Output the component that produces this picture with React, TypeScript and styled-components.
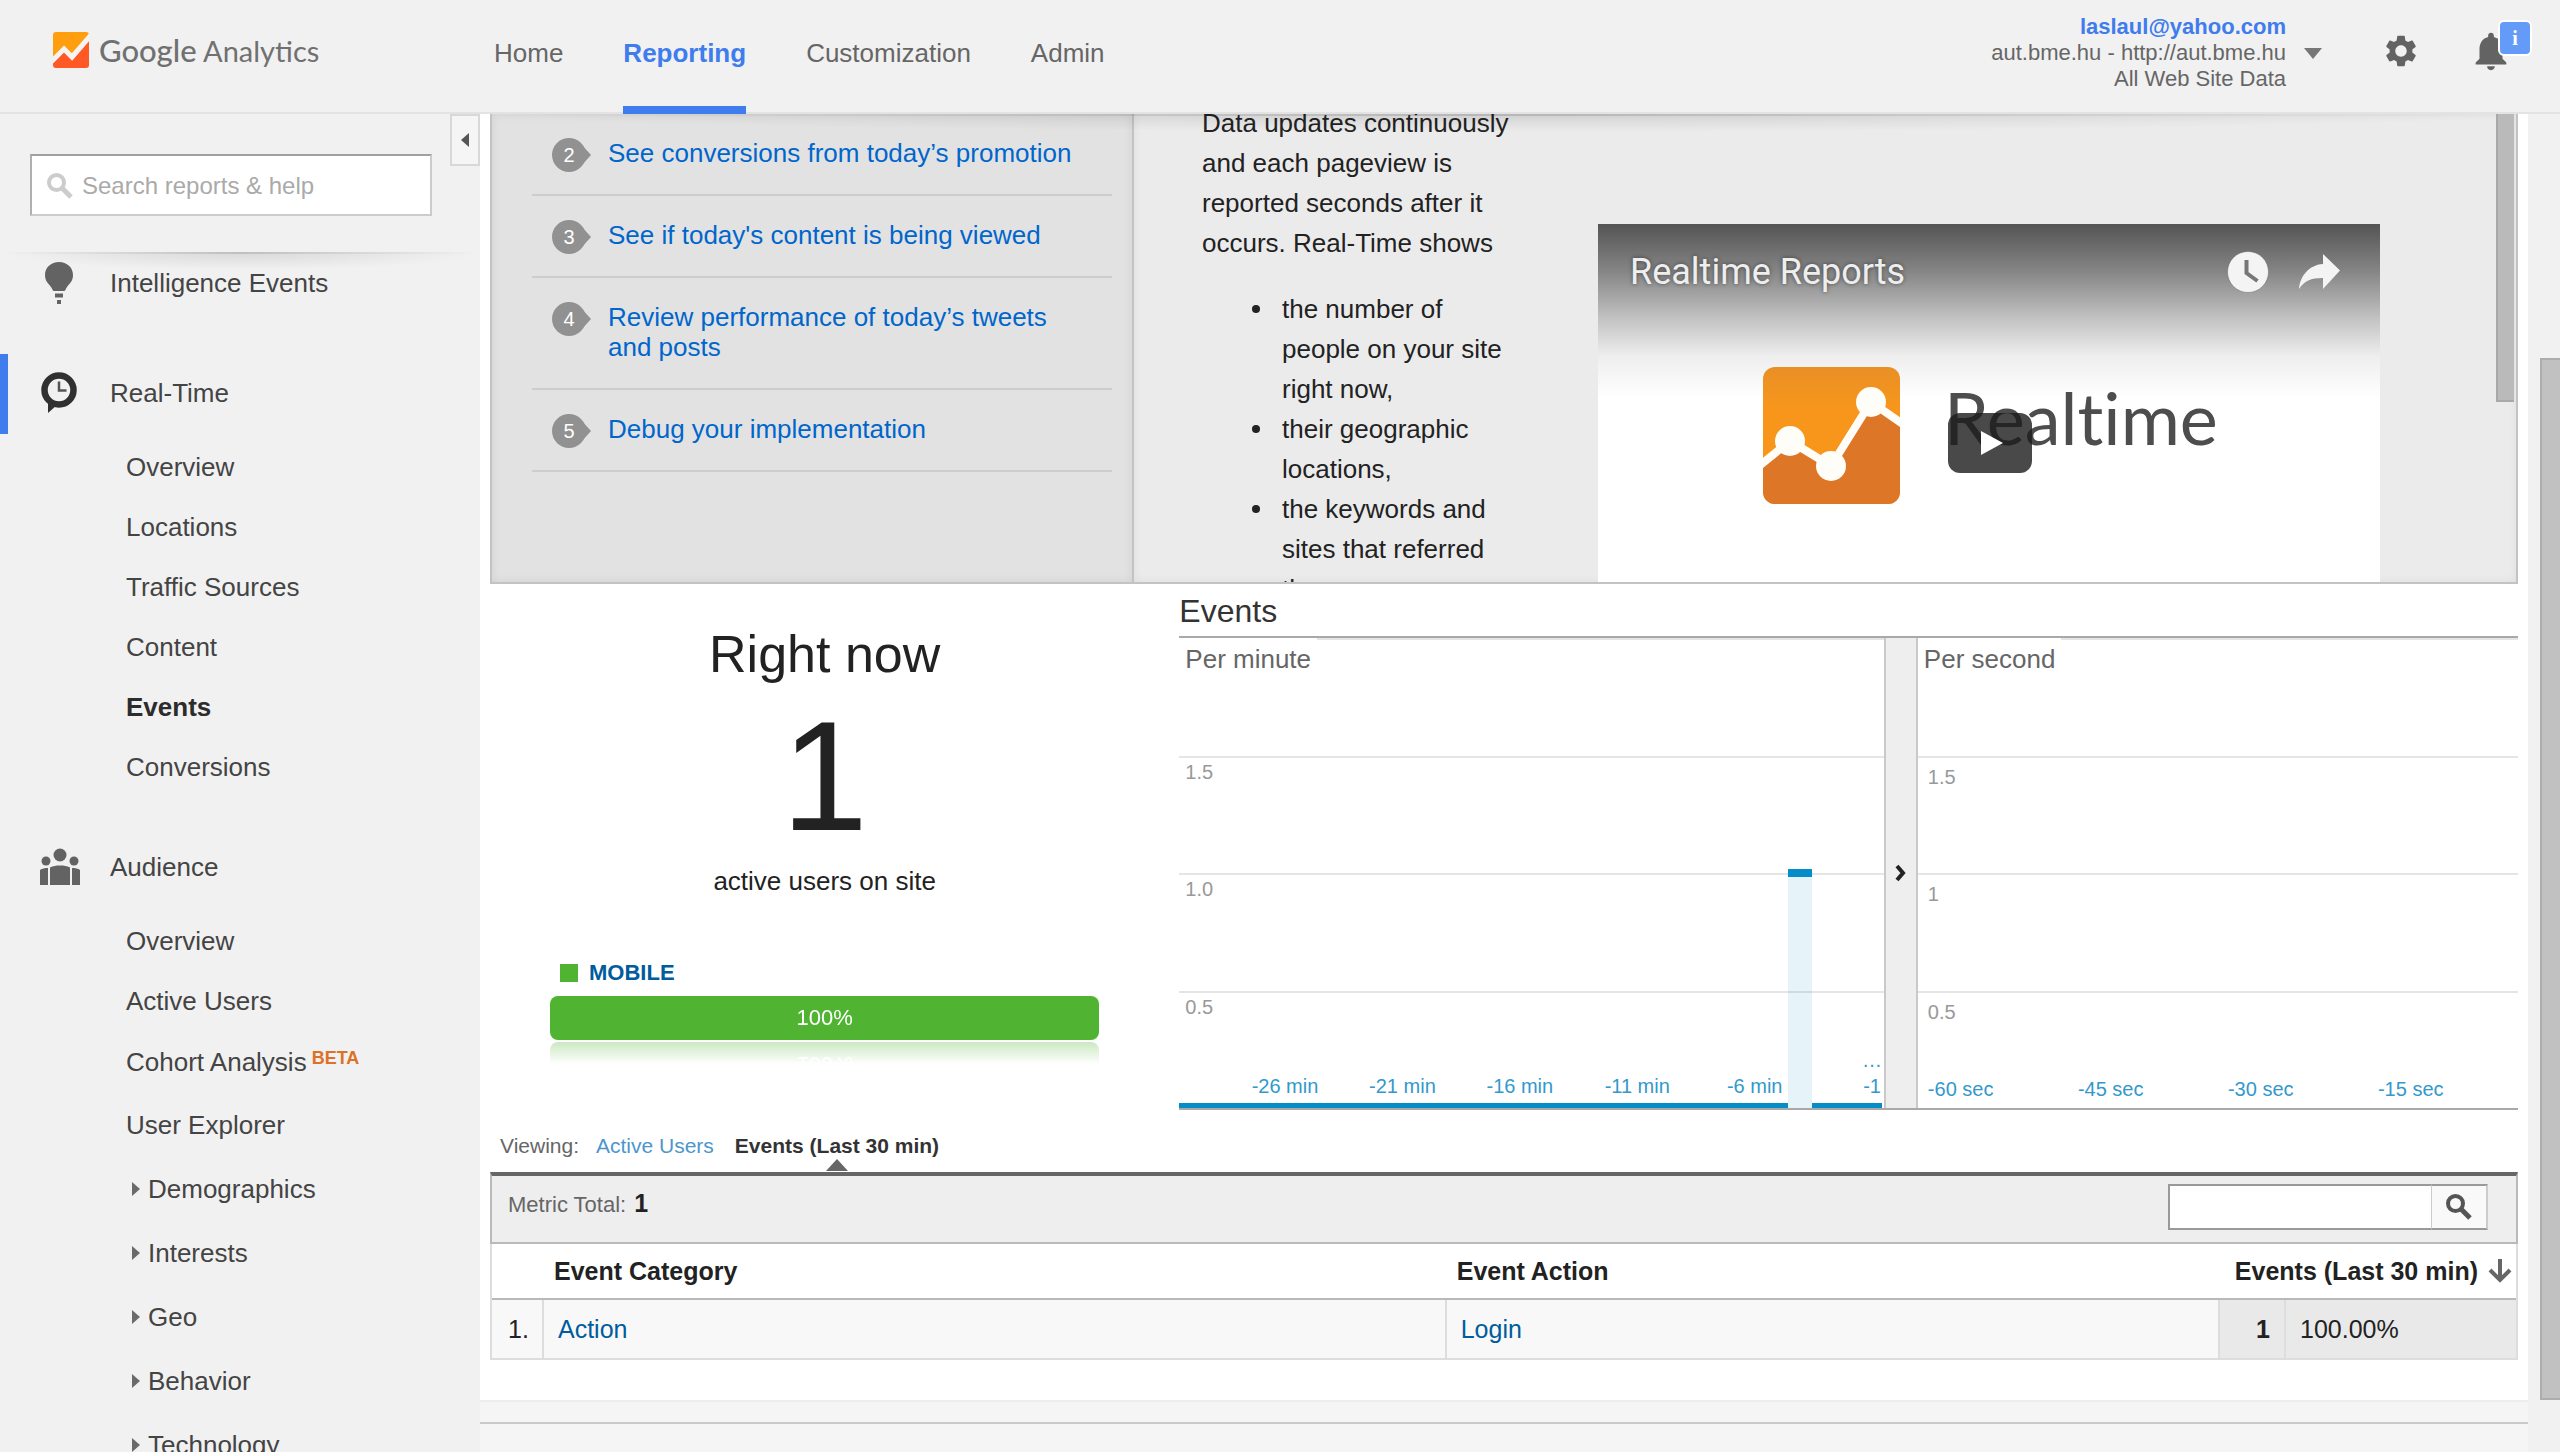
import React from 'react';
import styled, { createGlobalStyle } from 'styled-components';
import { MdSettings, MdNotifications } from 'react-icons/md';

const GlobalStyle = createGlobalStyle`
  * { box-sizing: border-box; }
  body {
    margin: 0;
    background: #f1f1f1;
    color: #222;
    font: 26px/30px "Liberation Sans", Arial, Helvetica, sans-serif;
  }
  a { color: inherit; text-decoration: none; }
  button, input { font: inherit; color: inherit; border-radius: 0; }
  button { cursor: pointer; }
  h1, h2, h3, p, ul, ol { margin: 0; padding: 0; font-size: inherit; font-weight: normal; }
`;

const Page = styled.div`
  display: flex;
  flex-direction: column;
  height: 100vh;
  overflow: hidden;
`;

/* ---------- Header ---------- */

const Header = styled.header`
  display: flex;
  flex: none;
  height: 114px;
  border-bottom: 2px solid #e3e3e3;
  background: #f1f1f1;
  color: #666;
`;

const Brand = styled.a`
  display: flex;
  align-items: center;
  gap: 10px;
  width: 494px;
  padding: 0 0 12px 53px;
  font-family: Lato, "Liberation Sans", sans-serif;
  font-size: 29px;
  line-height: 40px;
  color: #707070;
`;

const BrandWord = styled.span<{ $strong?: boolean }>`
  font-size: ${(p) => (p.$strong ? 31 : 29)}px;
  font-weight: ${(p) => (p.$strong ? 500 : 400)};
`;

const TopNav = styled.nav`
  display: flex;
  gap: 60px;
`;

const TopLink = styled.a<{ $active?: boolean }>`
  height: 114px;
  line-height: 106px;
  border-bottom: 8px solid ${(p) => (p.$active ? '#3f7ced' : 'transparent')};
  color: ${(p) => (p.$active ? '#3f7ced' : '#666')};
  font-weight: ${(p) => (p.$active ? 700 : 400)};
`;

const HeaderTools = styled.div`
  display: flex;
  align-items: center;
  margin-left: auto;
  padding: 0 30px 10px 0;
`;

const PlainButton = styled.button`
  display: flex;
  align-items: center;
  padding: 0;
  border: 0;
  background: none;
`;

const Account = styled(PlainButton)`
  gap: 18px;
  margin-right: 60px;
  padding-top: 4px;
  text-align: right;
  font-size: 22px;
  line-height: 26px;
  color: #666;

  b { display: block; color: #3f7ced; }
  span span { display: block; }
`;

const Caret = styled.i`
  border: 9px solid transparent;
  border-top: 11px solid #777;
  border-bottom: 0;
`;

const BellButton = styled(PlainButton)`
  position: relative;
  margin-left: 48px;
  padding-right: 16px;
`;

const Badge = styled.span`
  position: absolute;
  top: -8px;
  right: -2px;
  width: 34px;
  height: 36px;
  border: 2px solid #fff;
  border-radius: 6px;
  background: #659bf8;
  color: #fff;
  font: bold 20px/32px "Liberation Serif", serif;
  text-align: center;
`;

/* ---------- Frame ---------- */

const Body = styled.div`
  display: grid;
  grid-template-columns: 480px minmax(0, 1fr) 32px;
  flex: 1;
  min-height: 0;
`;

const EdgeShade = styled.div`
  position: absolute;
  z-index: 2;
  top: 0;
  left: 0;
  right: 0;
  height: 18px;
  pointer-events: none;
  background:
    linear-gradient(90deg, transparent, rgba(0, 0, 0, 0.12), transparent) 0 0 / 100% 2px no-repeat,
    radial-gradient(50% 100% at 50% 0, rgba(0, 0, 0, 0.1), transparent);
`;

const ScrollTrack = styled.div`
  display: flex;
  padding: 244px 0 52px 12px;
  background: #f1f1f1;
`;

const ScrollThumb = styled.div`
  flex: 1;
  border: 2px solid #adadad;
  border-right: 0;
  background: #c1c1c1;
`;

/* ---------- Sidebar ---------- */

const Sidebar = styled.aside`
  display: flex;
  flex-direction: column;
  min-height: 0;
`;

const SidebarTop = styled.div`
  display: flex;
  justify-content: space-between;
  flex: none;
  height: 138px;
  padding-left: 30px;
`;

const SearchForm = styled.form`
  display: flex;
  align-items: center;
  gap: 6px;
  width: 402px;
  height: 62px;
  margin-top: 40px;
  padding: 2px 0 0 14px;
  border: 2px solid #ccc;
  border-top-color: #a0a0a0;
  border-left-color: #b0b0b0;
  background: #fff;
`;

const SearchInput = styled.input`
  flex: 1;
  min-width: 0;
  border: 0;
  outline: 0;
  background: none;
  font-size: 24px;
  line-height: 30px;
  &::placeholder { color: #aaa; opacity: 1; }
`;

const Collapse = styled.button`
  display: flex;
  align-items: center;
  justify-content: center;
  width: 30px;
  height: 52px;
  padding: 0;
  border: 2px solid #d8d8d8;
  background: #f5f5f5;
`;

const LeftCaret = styled.i`
  border: 7px solid transparent;
  border-right: 8px solid #555;
  border-left: 0;
`;

const SideScroll = styled.nav`
  position: relative;
  flex: 1;
  min-height: 0;
  overflow: hidden;
  color: #444;
`;

const SideList = styled.ul`
  display: flex;
  flex-direction: column;
  gap: 30px;
  margin-top: -8px;
  list-style: none;
`;

const Section = styled.a<{ $active?: boolean }>`
  display: grid;
  grid-template-columns: 102px 1fr;
  align-items: center;
  height: 80px;
  padding-bottom: 2px;
  border-left: 8px solid ${(p) => (p.$active ? '#3f7ced' : 'transparent')};
  svg { margin-left: 32px; }
`;

const SubList = styled.ul`
  padding: 3px 0 1px 126px;
  list-style: none;
`;

const SubItem = styled.li<{ $tall?: boolean }>`
  line-height: ${(p) => (p.$tall ? 64 : 60)}px;
`;

const SubLink = styled.a<{ $active?: boolean }>`
  display: flex;
  align-items: center;
  ${(p) => p.$active && 'font-weight: 700; color: #2c2c2c;'}
`;

const Beta = styled.sup`
  align-self: flex-start;
  margin: 14px 0 0 5px;
  padding-bottom: 22px;
  color: #dd7127;
  font-size: 18px;
  font-weight: 700;
  line-height: 26px;
`;

const RightCaret = styled.i`
  margin: 0 8px 0 6px;
  border: 7px solid transparent;
  border-left: 8px solid #6a6a6a;
  border-right: 0;
`;

/* ---------- Main ---------- */

const Main = styled.main`
  position: relative;
  display: flex;
  flex-direction: column;
  min-height: 0;
  background: #fff;
`;

const Content = styled.div`
  flex: none;
  padding: 0 10px 40px;
`;

const HelpPanel = styled.section`
  display: grid;
  grid-template-columns: 642px minmax(0, 1fr);
  height: 470px;
  border: 2px solid #c3c3c3;
  border-top: 0;
  background: #ebebeb;
`;

const Tasks = styled.ol`
  padding: 0 20px 0 40px;
  border-right: 2px solid #c3c3c3;
  background: #e2e2e2;
  box-shadow: inset 0 0 10px rgba(0, 0, 0, 0.08);
  list-style: none;
`;

const Task = styled.li`
  display: grid;
  grid-template-columns: 38px 1fr;
  gap: 18px;
  padding: 24px 20px 22px 20px;
  border-bottom: 2px solid #cdcdcd;
  color: #0066cc;

  a { padding-bottom: 4px; }
`;

const Bullet = styled.span`
  position: relative;
  display: block;
  width: 34px;
  height: 34px;
  border-radius: 50%;
  background: #919191;
  color: #fff;
  font-size: 20px;
  line-height: 34px;
  text-align: center;

  &::after {
    content: '';
    position: absolute;
    top: 7px;
    right: -5px;
    border: 10px solid transparent;
    border-left: 9px solid #919191;
    border-right: 0;
  }
`;

const HelpBody = styled.div`
  display: flex;
  min-width: 0;
  padding-left: 68px;
  overflow: hidden;
  box-shadow: inset 0 0 10px rgba(0, 0, 0, 0.06);
`;

const HelpText = styled.div`
  flex: none;
  width: 320px;
  margin-top: -11px;
  line-height: 40px;

  ul { padding-left: 80px; margin-top: 26px; list-style: none; }
  li { position: relative; }
  li::before {
    content: '';
    position: absolute;
    left: -30px;
    top: 16px;
    width: 8px;
    height: 8px;
    border-radius: 50%;
    background: #222;
  }
`;

const Video = styled.div`
  flex: 0 1 782px;
  height: 440px;
  margin: 110px 0 0 76px;
  background: linear-gradient(#545454, #868686 48px, #c4c4c4 96px, #eee 132px, #fff 174px);
`;

const VideoBar = styled.div`
  display: flex;
  align-items: center;
  height: 96px;
  padding: 0 38px 0 32px;
  color: #eee;
  font: 36px/40px Roboto, sans-serif;
  text-shadow: 0 0 4px rgba(0, 0, 0, 0.5);

  h3 { flex: 1; }
  button + button { margin-left: 28px; }
`;

const Poster = styled.div`
  display: grid;
  grid-template-columns: 137px 1fr;
  column-gap: 44px;
  padding: 47px 0 0 165px;
`;

const PosterWord = styled.span`
  grid-area: 1 / 2;
  padding-top: 8px;
  color: #4d4d4d;
  font: 72px/84px Lato, sans-serif;
  font-variant-ligatures: none;
`;

const Play = styled.button`
  grid-area: 1 / 2;
  display: flex;
  align-items: center;
  justify-content: center;
  width: 84px;
  height: 60px;
  margin: 46px 0 0 4px;
  padding: 0 0 0 4px;
  border: 0;
  border-radius: 12px;
  background: rgba(28, 28, 28, 0.8);
  z-index: 1;
`;

const PlayMark = styled.i`
  border: 12px solid transparent;
  border-left: 22px solid #fff;
  border-right: 0;
`;

const InnerThumb = styled.div`
  flex: none;
  width: 18px;
  height: 288px;
  margin: 0 2px 0 auto;
  border: 2px solid #a9a9a9;
  border-width: 0 0 2px 2px;
  background: #bababa;
`;

/* ---------- Overview ---------- */

const Overview = styled.div`
  display: grid;
  grid-template-columns: minmax(0, 1fr) minmax(0, 2fr);
  gap: 20px;
`;

const RightNow = styled.section`
  padding: 40px 60px 0;
  text-align: center;

  h2 { font-size: 52px; line-height: 60px; }
`;

const BigCount = styled.p`
  margin: 22px 0 20px;
  font-size: 156px;
  line-height: 140px;
`;

const Legend = styled.a`
  display: flex;
  align-items: center;
  gap: 11px;
  margin: 64px 0 10px;
  padding-left: 10px;
  color: #005c9c;
  font-size: 22px;
  font-weight: 700;
  line-height: 26px;

  &::before {
    content: '';
    width: 18px;
    height: 18px;
    background: #50b432;
  }
`;

const ShareBar = styled.div`
  height: 44px;
  border-radius: 8px;
  background: #50b432;
  color: #fff;
  font-size: 22px;
  line-height: 44px;
  -webkit-box-reflect: below 2px linear-gradient(transparent 50%, rgba(0, 0, 0, 0.3));
`;

const EventsTitle = styled.h2`
  padding-top: 2px;
  border-bottom: 2px solid #a9a9a9;
  color: #333;
  font-size: 32px;
  line-height: 50px;
`;

const Charts = styled.div`
  display: grid;
  grid-template-columns: minmax(0, 27fr) 34px minmax(0, 23fr);
  height: 472px;
  border-bottom: 2px solid #a9a9a9;
`;

const Expand = styled.button`
  display: flex;
  align-items: center;
  justify-content: center;
  padding: 0;
  border: solid #c9c9c9;
  border-width: 0 2px;
  background: #eee;
`;

const Plot = styled.figure`
  display: grid;
  grid-template: 100% / 100%;
  margin: 0;
  font-size: 20px;

  > * { grid-area: 1 / 1; }
`;

const PlotTitle = styled.figcaption`
  justify-self: start;
  align-self: start;
  padding: 0 6px;
  background: #fff;
  color: #666;
  font-size: 26px;
  line-height: 42px;
`;

const GridLines = styled.div<{ $line: number; $inset: number }>`
  display: grid;
  grid-template-rows: repeat(4, 1fr);
  color: #999;
  line-height: ${(p) => p.$line}px;

  span { padding-left: ${(p) => p.$inset}px; border-top: 2px solid #e5e5e5; }
`;

const Bars = styled.div`
  display: grid;
  grid-template-columns: repeat(30, 1fr);
  align-items: end;
  padding-right: 2px;
`;

const Bar = styled.i<{ $on: boolean }>`
  border-top: ${(p) => (p.$on ? 8 : 5)}px solid #058dc7;
  background: rgba(5, 141, 199, 0.1);
  background-clip: padding-box;
`;

const MinuteAxis = styled.div`
  display: grid;
  grid-template-columns: repeat(30, 1fr);
  align-items: end;
  padding-bottom: 9px;
  color: #3399cc;
  line-height: 26px;
  text-align: center;
  white-space: nowrap;
`;

const MinuteLabel = styled.span<{ $slot: number; $span: number }>`
  grid-row: 1;
  grid-column: ${(p) => p.$slot} / span ${(p) => p.$span};
`;

const SecondAxis = styled.div`
  display: grid;
  grid-template-columns: repeat(4, 1fr);
  align-items: end;
  padding-bottom: 6px;
  color: #3399cc;
  line-height: 26px;

  span { padding-left: 10px; }
`;

/* ---------- Report table ---------- */

const Viewing = styled.nav`
  display: flex;
  align-items: center;
  height: 62px;
  padding: 10px 10px 0;
  color: #666;
  font-size: 21px;
  line-height: 24px;
`;

const ViewTab = styled.a<{ $active?: boolean }>`
  position: relative;
  margin-left: ${(p) => (p.$active ? 21 : 17)}px;
  color: ${(p) => (p.$active ? '#333' : '#4d96cc')};
  font-weight: ${(p) => (p.$active ? 700 : 400)};

  &::after {
    content: '';
    display: ${(p) => (p.$active ? 'block' : 'none')};
    position: absolute;
    left: 50%;
    top: 25px;
    margin-left: -11px;
    border: 11px solid transparent;
    border-bottom: 12px solid #666;
    border-top: 0;
  }
`;

const MetricBar = styled.div`
  display: flex;
  align-items: center;
  justify-content: space-between;
  padding: 8px 28px 12px 16px;
  border: 2px solid #bababa;
  border-top: 4px solid #666;
  background: #eee;
  color: #666;
  font-size: 22px;

  b { margin-left: 2px; color: #222; font-size: 25px; }
  p { padding-bottom: 6px; }
`;

const TableSearch = styled.form`
  display: flex;
  width: 320px;
  height: 46px;

  input {
    flex: 1;
    min-width: 0;
    border: 2px solid #999;
    border-right: 0;
    background: #fff;
  }

  button {
    display: flex;
    align-items: center;
    justify-content: center;
    width: 57px;
    padding: 0;
    border: solid #999;
    border-width: 2px 2px 2px 1px;
    border-left-color: #ccc;
    border-right-color: #ccc;
    background: #f9f9f9;
  }
`;

const Report = styled.table`
  width: 100%;
  table-layout: fixed;
  border: 2px solid #ddd;
  border-top: 0;
  border-spacing: 0;
  font-size: 25px;
  line-height: 30px;
  text-align: left;

  th { padding: 12px 12px; border-bottom: 2px solid #b9b9b9; }
  td { padding: 14px 14px; background: #f8f8f8; border-left: 2px solid #ddd; }
  td:first-child { padding: 14px 0 14px 16px; border-left: 0; }
  td a { color: #005c9c; }
`;

const Cols = {
  Index: styled.col`width: 50px;`,
  Category: styled.col`width: 44.6%;`,
  Action: styled.col``,
  Count: styled.col`width: 66px;`,
  Share: styled.col`width: 232px;`,
};

const SortHead = styled.th`
  && { padding: 12px 4px 12px 0; }
  text-align: right;
`;

const SortButton = styled.button`
  display: inline-flex;
  align-items: center;
  gap: 10px;
  padding: 0;
  border: 0;
  background: none;
  font-weight: 700;
`;

const NumCell = styled.td<{ $strong?: boolean }>`
  && { background: #e9e9e9; }
  font-weight: ${(p) => (p.$strong ? 700 : 400)};
  text-align: ${(p) => (p.$strong ? 'right' : 'left')};
`;

const Footer = styled.footer`
  flex: 1;
  border-top: 2px solid #eee;
  background: #f5f5f5;

  &::before {
    content: '';
    display: block;
    height: 20px;
    border-bottom: 2px solid #c9c9c9;
  }
`;

/* ---------- Drawings ---------- */

const AnalyticsLogo = () => (
  <svg width="36" height="36" viewBox="0 0 36 36" aria-hidden="true">
    <path d="M3 0h30a3 3 0 0 1 3 3v2L19 25l-8-8L0 28V3a3 3 0 0 1 3-3z" fill="#ff9f0f" />
    <path d="M0 28l11-11 8 8L36 5v28a3 3 0 0 1-3 3H3a3 3 0 0 1-3-3z" fill="#ff5a26" />
    <path d="M-2 30 11 17l8 8L38 3" fill="none" stroke="#f6f4f2" strokeWidth="5" />
  </svg>
);

const Magnifier = ({ color }: { color: string }) => (
  <svg width="28" height="28" viewBox="0 0 28 28" fill="none" stroke={color} aria-hidden="true">
    <circle cx="10.500" cy="10.500" r="7.500" strokeWidth="4" />
    <path d="M16.500 16.500 25 25" strokeWidth="5" />
  </svg>
);

const Bulb = () => (
  <svg width="40" height="44" viewBox="0 0 40 44" fill="#636363" aria-hidden="true">
    <path d="M19 1c8 0 14 5.500 14 13 0 6-3 8-6 12-1.500 2-1.500 4-3 4H14c-1.500 0-1.500-2-3-4-3-4-6-6-6-12C5 6.500 11 1 19 1z" />
    <path d="M15 32.500h8v4h-8zM17 39h4v4h-4z" />
  </svg>
);

const ClockBubble = () => (
  <svg width="40" height="44" viewBox="0 0 40 44" fill="none" aria-hidden="true">
    <circle cx="19" cy="19" r="14.500" stroke="#303030" strokeWidth="6.500" />
    <path d="M8 30v12l9-8z" fill="#303030" />
    <path d="M19 10.500v9h7.500" stroke="#555" strokeWidth="2.500" />
  </svg>
);

const People = () => (
  <svg width="40" height="38" viewBox="0 0 40 38" fill="#636363" aria-hidden="true">
    <circle cx="20" cy="7" r="6.500" />
    <circle cx="6" cy="13" r="4.500" />
    <circle cx="34" cy="13" r="4.500" />
    <path d="M10 37V19.500c3-1.500 6-2 10-2s7 .5 10 2V37zM0 37V22c2-1.500 5-2 8-2v17zM40 37V22c-2-1.500-5-2-8-2v17z" />
  </svg>
);

const WatchLater = () => (
  <svg width="44" height="44" viewBox="0 0 44 44" aria-hidden="true">
    <circle cx="22" cy="22" r="20.500" fill="#f4f4f4" stroke="#666" strokeOpacity=".5" />
    <path d="M20.500 10v13l11 8" fill="none" stroke="#777" strokeWidth="4" />
  </svg>
);

const ShareArrow = () => (
  <svg width="44" height="40" viewBox="0 0 44 40" aria-hidden="true">
    <path d="M25 2l17 16.500L25 37V26C13 26 6 29 1 37c1-12 9-24 24-25z" fill="#f4f4f4" />
  </svg>
);

const PosterLogo = () => (
  <svg width="137" height="137" viewBox="0 0 137 137" aria-hidden="true">
    <defs>
      <clipPath id="poster-tile"><rect width="137" height="137" rx="12" /></clipPath>
      <linearGradient id="poster-glow" x1="0" y1="0" x2="0" y2="1">
        <stop offset="0" stopColor="#e98f26" />
        <stop offset=".3" stopColor="#f7961b" />
      </linearGradient>
    </defs>
    <g clipPath="url(#poster-tile)">
      <path d="M0 0h137v137H0z" fill="url(#poster-glow)" />
      <path d="M0 97 27 74l41 25 40-64 29 20v82H0z" fill="#dd7627" />
      <path d="M-4 99 27 74l41 25 40-64 33 23" fill="none" stroke="#fffdf8" strokeWidth="8" />
      <circle cx="27" cy="74" r="15" fill="#fffdf8" />
      <circle cx="68" cy="99" r="15" fill="#fffdf8" />
      <circle cx="108" cy="35" r="15" fill="#fffdf8" />
    </g>
  </svg>
);

const Chevron = () => (
  <svg width="12" height="18" viewBox="0 0 12 18" fill="none" stroke="#222" strokeWidth="4" aria-hidden="true">
    <path d="M2 2l6 7-6 7" />
  </svg>
);

const SortArrow = () => (
  <svg width="24" height="24" viewBox="0 0 24 24" fill="none" stroke="#666" strokeWidth="4" aria-hidden="true">
    <path d="M12 0v20M2 11l10 10 10-10" />
  </svg>
);

/* ---------- Data ---------- */

const topLinks = ['Home', 'Reporting', 'Customization', 'Admin'];
const realTimeLinks = ['Overview', 'Locations', 'Traffic Sources', 'Content', 'Events', 'Conversions'];
const audienceGroups = ['Demographics', 'Interests', 'Geo', 'Behavior', 'Technology'];
const tasks = [
  'See conversions from today’s promotion',
  "See if today's content is being viewed",
  'Review performance of today’s tweets and posts',
  'Debug your implementation',
];
const eventsPerMinute = Array.from({ length: 30 }, (_, i) => (i === 26 ? 1 : 0));
const minuteLabels = ['-26 min', '-21 min', '-16 min', '-11 min', '-6 min'];
const secondLabels = ['-60 sec', '-45 sec', '-30 sec', '-15 sec'];
const axisMax = 2;

const stop = (e: React.FormEvent) => e.preventDefault();

export default function App() {
  return (
    <Page>
      <GlobalStyle />
      <Header>
        <Brand href="#">
          <AnalyticsLogo />
          <span>
            <BrandWord $strong>Google</BrandWord> <BrandWord>Analytics</BrandWord>
          </span>
        </Brand>
        <TopNav>
          {topLinks.map((label) => (
            <TopLink key={label} href="#" $active={label === 'Reporting'}>{label}</TopLink>
          ))}
        </TopNav>
        <HeaderTools>
          <Account type="button">
            <span>
              <b>laslaul@yahoo.com</b>
              <span>aut.bme.hu - http://aut.bme.hu</span>
              <span>All Web Site Data</span>
            </span>
            <Caret />
          </Account>
          <PlainButton type="button" aria-label="Settings">
            <MdSettings size={38} color="#636363" />
          </PlainButton>
          <BellButton type="button" aria-label="Notifications">
            <MdNotifications size={46} color="#636363" />
            <Badge>i</Badge>
          </BellButton>
        </HeaderTools>
      </Header>

      <Body>
        <Sidebar>
          <SidebarTop>
            <SearchForm onSubmit={stop}>
              <Magnifier color="#ccc" />
              <SearchInput aria-label="Search reports & help" placeholder="Search reports & help" />
            </SearchForm>
            <Collapse type="button" aria-label="Collapse menu"><LeftCaret /></Collapse>
          </SidebarTop>
          <SideScroll>
            <EdgeShade />
            <SideList>
              <li>
                <Section href="#"><Bulb />Intelligence Events</Section>
              </li>
              <li>
                <Section href="#" $active><ClockBubble />Real-Time</Section>
                <SubList>
                  {realTimeLinks.map((label) => (
                    <SubItem key={label}>
                      <SubLink href="#" $active={label === 'Events'}>{label}</SubLink>
                    </SubItem>
                  ))}
                </SubList>
              </li>
              <li>
                <Section href="#"><People />Audience</Section>
                <SubList>
                  <SubItem><SubLink href="#">Overview</SubLink></SubItem>
                  <SubItem><SubLink href="#">Active Users</SubLink></SubItem>
                  <SubItem><SubLink href="#">Cohort Analysis<Beta>BETA</Beta></SubLink></SubItem>
                  <SubItem $tall><SubLink href="#">User Explorer</SubLink></SubItem>
                  {audienceGroups.map((label) => (
                    <SubItem key={label} $tall>
                      <SubLink href="#"><RightCaret />{label}</SubLink>
                    </SubItem>
                  ))}
                </SubList>
              </li>
            </SideList>
          </SideScroll>
        </Sidebar>

        <Main>
          <EdgeShade />
          <Content>
            <HelpPanel>
              <Tasks>
                {tasks.map((task, i) => (
                  <Task key={task}>
                    <Bullet>{i + 2}</Bullet>
                    <a href="#">{task}</a>
                  </Task>
                ))}
              </Tasks>
              <HelpBody>
                <HelpText>
                  <p>Data updates continuously and each pageview is reported seconds after it occurs. Real-Time shows</p>
                  <ul>
                    <li>the number of people on your site right now,</li>
                    <li>their geographic locations,</li>
                    <li>the keywords and sites that referred them,</li>
                  </ul>
                </HelpText>
                <Video>
                  <VideoBar>
                    <h3>Realtime Reports</h3>
                    <PlainButton type="button" aria-label="Watch later"><WatchLater /></PlainButton>
                    <PlainButton type="button" aria-label="Share"><ShareArrow /></PlainButton>
                  </VideoBar>
                  <Poster>
                    <PosterLogo />
                    <PosterWord>Realtime</PosterWord>
                    <Play type="button" aria-label="Play"><PlayMark /></Play>
                  </Poster>
                </Video>
                <InnerThumb />
              </HelpBody>
            </HelpPanel>

            <Overview>
              <RightNow>
                <h2>Right now</h2>
                <BigCount>1</BigCount>
                <p>active users on site</p>
                <Legend href="#">MOBILE</Legend>
                <ShareBar>100%</ShareBar>
              </RightNow>
              <section>
                <EventsTitle>Events</EventsTitle>
                <Charts>
                  <Plot>
                    <GridLines $line={28} $inset={6}>
                      <span />
                      <span>1.5</span>
                      <span>1.0</span>
                      <span>0.5</span>
                    </GridLines>
                    <PlotTitle>Per minute</PlotTitle>
                    <Bars>
                      {eventsPerMinute.map((n, i) => (
                        <Bar
                          key={i}
                          $on={n > 0}
                          style={{ height: n > 0 ? `calc(${(n / axisMax) * 100}% + 4px)` : undefined }}
                        />
                      ))}
                    </Bars>
                    <MinuteAxis>
                      {minuteLabels.map((label, i) => (
                        <MinuteLabel key={label} $slot={i * 5 + 3} $span={5}>{label}</MinuteLabel>
                      ))}
                      <MinuteLabel $slot={30} $span={1}>…<br />-1</MinuteLabel>
                    </MinuteAxis>
                  </Plot>
                  <Expand type="button" aria-label="Expand per minute chart"><Chevron /></Expand>
                  <Plot>
                    <GridLines $line={38} $inset={10}>
                      <span />
                      <span>1.5</span>
                      <span>1</span>
                      <span>0.5</span>
                    </GridLines>
                    <PlotTitle>Per second</PlotTitle>
                    <SecondAxis>
                      {secondLabels.map((label) => <span key={label}>{label}</span>)}
                    </SecondAxis>
                  </Plot>
                </Charts>
              </section>
            </Overview>

            <Viewing>
              Viewing:
              <ViewTab href="#">Active Users</ViewTab>
              <ViewTab href="#" $active>Events (Last 30 min)</ViewTab>
            </Viewing>
            <MetricBar>
              <p>Metric Total: <b>1</b></p>
              <TableSearch onSubmit={stop}>
                <input aria-label="Filter table" />
                <button type="submit" aria-label="Search"><Magnifier color="#555" /></button>
              </TableSearch>
            </MetricBar>
            <Report>
              <colgroup>
                <Cols.Index />
                <Cols.Category />
                <Cols.Action />
                <Cols.Count />
                <Cols.Share />
              </colgroup>
              <thead>
                <tr>
                  <th />
                  <th scope="col">Event Category</th>
                  <th scope="col">Event Action</th>
                  <SortHead scope="col" colSpan={2}>
                    <SortButton type="button">Events (Last 30 min)<SortArrow /></SortButton>
                  </SortHead>
                </tr>
              </thead>
              <tbody>
                <tr>
                  <td>1.</td>
                  <td><a href="#">Action</a></td>
                  <td><a href="#">Login</a></td>
                  <NumCell $strong>1</NumCell>
                  <NumCell>100.00%</NumCell>
                </tr>
              </tbody>
            </Report>
          </Content>
          <Footer />
        </Main>

        <ScrollTrack><ScrollThumb /></ScrollTrack>
      </Body>
    </Page>
  );
}
